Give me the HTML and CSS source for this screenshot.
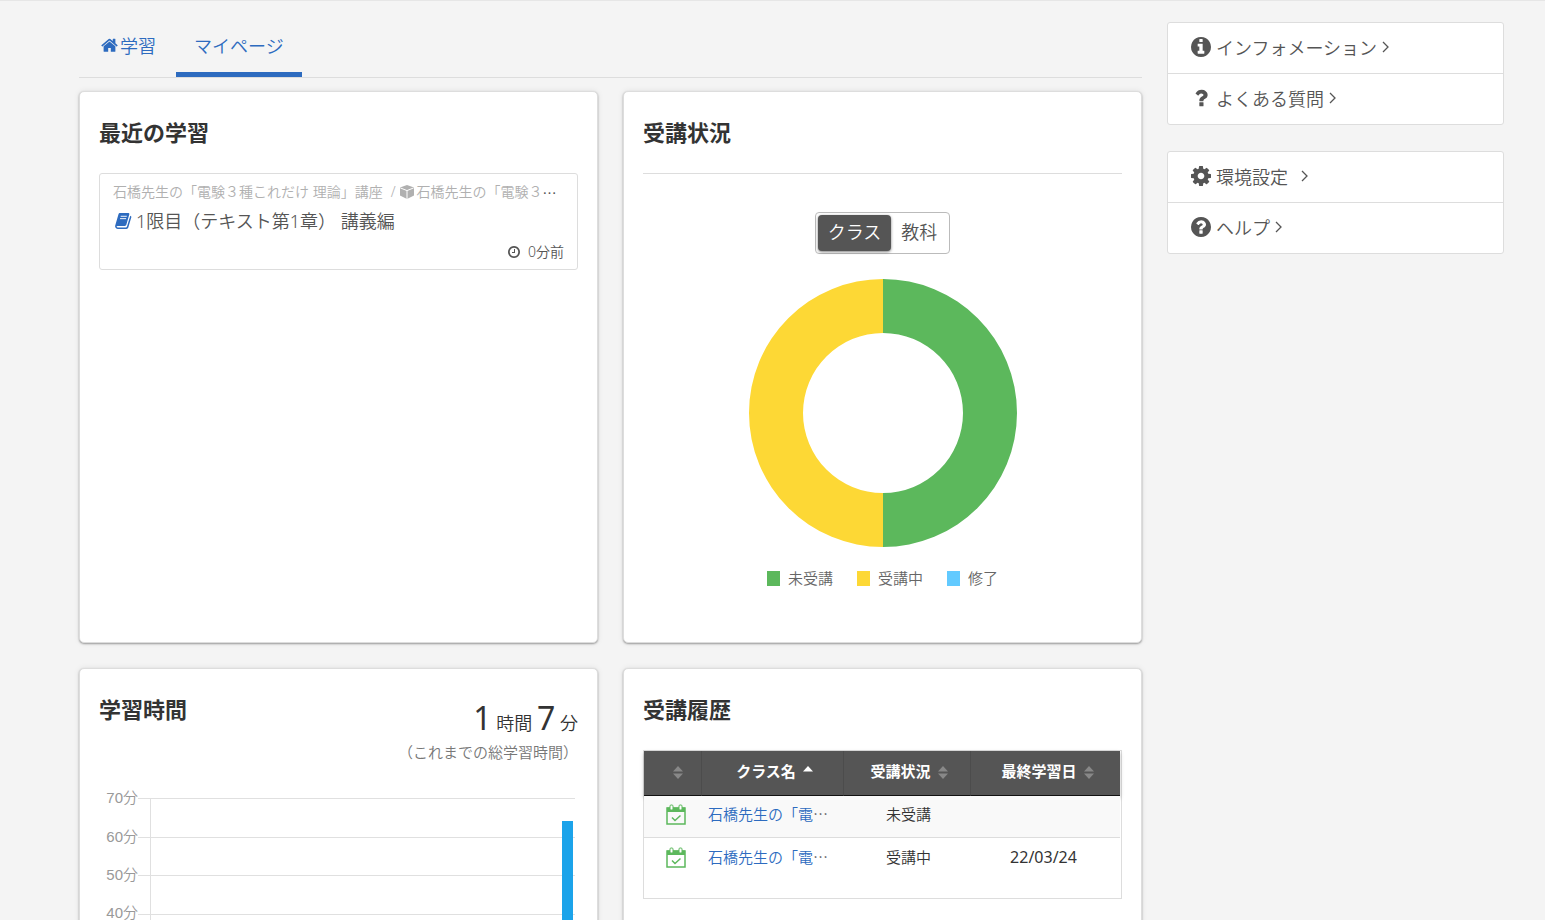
FILE: index.html
```
<!DOCTYPE html>
<html lang="ja">
<head>
    <meta charset="UTF-8">
    <meta name="viewport" content="width=device-width, initial-scale=1.0">
    <title>マイページ</title>
    <link rel="stylesheet" href="styles.css">
</head>
<body>
    <div class="page">
        <main class="main">
            <nav class="tabs">
                <a class="tab" href="#">
                    <svg class="icon icon-home" viewBox="64 192 1664 1344"><path d="M1472 992v480q0 26-19 45t-45 19h-384v-384h-256v384h-384q-26 0-45-19t-19-45v-480q0-1 .5-3t.5-3l575-474 575 474q1 2 1 6zm223-69l-62 74q-8 9-21 11h-3q-13 0-21-7l-692-577-692 577q-12 8-24 7-13-2-21-11l-62-74q-8-10-7-23.5t11-21.5l719-599q32-26 76-26t76 26l244 204v-195q0-14 9-23t23-9h192q14 0 23 9t9 23v408l219 182q10 8 11 21.5t-7 23.5z"/></svg>
                    学習
                </a>
                <a class="tab active" href="#">マイページ</a>
            </nav>

            <div class="cards">
                <section class="card">
                    <h2>最近の学習</h2>
                    <a class="recent" href="#">
                        <span class="recent-path">
                            <span>石橋先生の「電験３種これだけ 理論」講座</span>
                            <span class="slash">/</span>
                            <svg class="icon icon-cube" viewBox="0 0 14 14"><path d="M7 0l7 2.4v8.2L7 14l-7-3.4V2.4z"/><path class="cut" d="M.3 2.9L7 5.6l6.7-2.7M7 5.6V14"/></svg>
                            <span>石橋先生の「電験３</span><span class="dots">…</span>
                        </span>
                        <span class="recent-title">
                            <svg class="icon icon-book" viewBox="0 0 18 17"><path d="M5.500 0h8.700c.8 0 1.200.6 1 1.300L12 12.600c-.2.800-.8 1.200-1.600 1.200H2.800c-1 0-1.300.6-1 1.100.2.300.6.500 1.100.5h8.500c.7 0 1.100-.3 1.300-1L16.200 3c.9.200 1.400.8 1.100 1.600l-3.200 10.800c-.3 1-1 1.500-2 1.500H3C1 16.900-.4 15 .2 13.200L3.600 1.500C3.900.500 4.500 0 5.500 0z"/><path class="cut" d="M6 3.500h6.500M5.300 6h6.500"/></svg>
                            1限目（テキスト第1章） 講義編
                        </span>
                        <span class="recent-time">
                            <svg class="icon icon-clock" viewBox="128 128 1536 1536"><path d="M1024 544v448q0 14-9 23t-23 9h-320q-14 0-23-9t-9-23v-64q0-14 9-23t23-9h224v-352q0-14 9-23t23-9h64q14 0 23 9t9 23zm416 352q0-148-73-273t-198-198-273-73-273 73-198 198-73 273 73 273 198 198 273 73 273-73 198-198 73-273zm224 0q0 209-103 385.5t-279.5 279.5-385.5 103-385.5-103-279.5-279.5-103-385.5 103-385.5 279.5-279.5 385.5-103 385.5 103 279.5 279.5 103 385.5z"/></svg>
                            0分前
                        </span>
                    </a>
                </section>

                <section class="card">
                    <h2>受講状況</h2>
                    <div class="status">
                        <div class="toggle">
                            <button class="toggle-btn active" type="button">クラス</button>
                            <button class="toggle-btn" type="button">教科</button>
                        </div>
                        <svg class="donut" viewBox="0 0 268 268">
                            <path class="fill-green" d="M134 0a134 134 0 0 1 0 268v-54a80 80 0 0 0 0-160z"/>
                            <path class="fill-yellow" d="M134 0a134 134 0 0 0 0 268v-54a80 80 0 0 1 0-160z"/>
                        </svg>
                        <ul class="legend">
                            <li><span class="swatch green"></span>未受講</li>
                            <li><span class="swatch yellow"></span>受講中</li>
                            <li><span class="swatch blue"></span>修了</li>
                        </ul>
                    </div>
                </section>

                <section class="card">
                    <div class="time-head">
                        <h2>学習時間</h2>
                        <div class="total">
                            <p class="total-time"><span class="num">1</span> 時間 <span class="num">7</span> 分</p>
                            <p class="total-note">（これまでの総学習時間）</p>
                        </div>
                    </div>
                    <svg class="bars" viewBox="0 0 479 300">
                        <path class="grid" d="M39 18.500H476M39 57.500H476M39 95.500H476M39 134.500H476M39 172.500H476M39 211.500H476M39 249.500H476M39 288.500H476M51.500 19V288"/>
                        <g class="axis">
                            <text x="39" y="23">70分</text>
                            <text x="39" y="62">60分</text>
                            <text x="39" y="100">50分</text>
                            <text x="39" y="138">40分</text>
                            <text x="39" y="177">30分</text>
                            <text x="39" y="216">20分</text>
                            <text x="39" y="254">10分</text>
                            <text x="39" y="293">0分</text>
                        </g>
                        <rect class="bar" x="463" y="41" width="11" height="247"/>
                    </svg>
                </section>

                <section class="card">
                    <h2>受講履歴</h2>
                    <div class="table-wrap">
                        <table class="history">
                            <colgroup>
                                <col class="col-icon">
                                <col class="col-name">
                                <col class="col-status">
                                <col class="col-date">
                            </colgroup>
                            <thead>
                                <tr>
                                    <th class="mark"><svg class="sort" viewBox="0 0 10 13"><path d="M5 0l5 5.500H0zM5 13l5-5.500H0z"/></svg></th>
                                    <th>クラス名<svg class="sort asc" viewBox="0 0 10 13"><path d="M5 0l5 5.500H0z"/></svg></th>
                                    <th>受講状況<svg class="sort" viewBox="0 0 10 13"><path d="M5 0l5 5.500H0zM5 13l5-5.500H0z"/></svg></th>
                                    <th>最終学習日<svg class="sort" viewBox="0 0 10 13"><path d="M5 0l5 5.500H0zM5 13l5-5.500H0z"/></svg></th>
                                </tr>
                            </thead>
                            <tbody>
                                <tr>
                                    <td class="mark"><svg class="calendar" viewBox="0 0 20 21"><path class="line" d="M1 4h18v16H1z"/><path d="M1 3.500h18V8H1z"/><rect class="ring" x="4" y="1" width="3" height="5" rx="1"/><rect class="ring" x="13" y="1" width="3" height="5" rx="1"/><path class="line" d="M6 13.500l3 3 5.500-5"/></svg></td>
                                    <td class="name"><a href="#">石橋先生の「電</a><span class="dots">…</span></td>
                                    <td>未受講</td>
                                    <td class="date"></td>
                                </tr>
                                <tr>
                                    <td class="mark"><svg class="calendar" viewBox="0 0 20 21"><path class="line" d="M1 4h18v16H1z"/><path d="M1 3.500h18V8H1z"/><rect class="ring" x="4" y="1" width="3" height="5" rx="1"/><rect class="ring" x="13" y="1" width="3" height="5" rx="1"/><path class="line" d="M6 13.500l3 3 5.500-5"/></svg></td>
                                    <td class="name"><a href="#">石橋先生の「電</a><span class="dots">…</span></td>
                                    <td>受講中</td>
                                    <td class="date">22/03/24</td>
                                </tr>
                            </tbody>
                        </table>
                    </div>
                </section>
            </div>
        </main>

        <aside class="side">
            <nav class="menu">
                <a class="menu-item" href="#">
                    <svg class="icon icon-menu" viewBox="128 128 1536 1536"><path d="M1152 1376v-160q0-14-9-23t-23-9h-96v-512q0-14-9-23t-23-9h-320q-14 0-23 9t-9 23v160q0 14 9 23t23 9h96v320h-96q-14 0-23 9t-9 23v160q0 14 9 23t23 9h448q14 0 23-9t9-23zm-128-896v-160q0-14-9-23t-23-9h-192q-14 0-23 9t-9 23v160q0 14 9 23t23 9h192q14 0 23-9t9-23zm640 416q0 209-103 385.5t-279.5 279.5-385.5 103-385.5-103-279.5-279.5-103-385.5 103-385.5 279.5-279.5 385.5-103 385.5 103 279.5 279.5 103 385.5z"/></svg>
                    インフォメーション
                    <svg class="chevron" viewBox="0 0 7 12"><path d="M1 1l5 5-5 5"/></svg>
                </a>
                <a class="menu-item" href="#">
                    <svg class="icon icon-menu" viewBox="128 128 1536 1536"><path d="M1088 1256v240q0 16-12 28t-28 12h-240q-16 0-28-12t-12-28v-240q0-16 12-28t28-12h240q16 0 28 12t12 28zm316-600q0 54-15.5 101t-35 76.5-55 59.5-57.5 43.5-61 35.5q-41 23-68.5 65t-27.5 67q0 17-12 32.5t-28 15.5h-240q-15 0-25.5-18.5t-10.5-37.5v-45q0-83 65-156.5t143-108.5q59-27 84-56t25-76q0-42-46.5-74t-107.5-32q-65 0-108 29-35 25-107 115-13 16-31 16-12 0-25-8l-164-125q-13-10-15.5-25t5.5-28q160-266 464-266 80 0 161 31t146 83 106 127.5 41 158.5z"/></svg>
                    よくある質問
                    <svg class="chevron" viewBox="0 0 7 12"><path d="M1 1l5 5-5 5"/></svg>
                </a>
            </nav>
            <nav class="menu">
                <a class="menu-item wide" href="#">
                    <svg class="icon icon-menu" viewBox="128 128 1536 1536"><path d="M1152 896q0-106-75-181t-181-75-181 75-75 181 75 181 181 75 181-75 75-181zm512-109v222q0 12-8 23t-20 13l-185 28q-19 54-39 91 35 50 107 138 10 12 10 25t-9 23q-27 37-99 108t-94 71q-12 0-26-9l-138-108q-44 23-91 38-16 136-29 186-7 28-36 28h-222q-14 0-24.5-8.5t-11.5-21.5l-28-184q-49-16-90-37l-141 107q-10 9-25 9-14 0-25-11-126-114-165-168-7-10-7-23 0-12 8-23 15-21 51-66.5t54-70.5q-27-50-41-99l-183-27q-13-2-21-12.5t-8-23.5v-222q0-12 8-23t19-13l186-28q14-46 39-92-40-57-107-138-10-12-10-24 0-10 9-23 26-36 98.5-107.5t94.5-71.5q13 0 26 10l138 107q44-23 91-38 16-136 29-186 7-28 36-28h222q14 0 24.5 8.5t11.5 21.5l28 184q49 16 90 37l142-107q9-9 24-9 13 0 25 10 129 119 165 170 7 8 7 22 0 12-8 23-15 21-51 66.5t-54 70.5q26 50 41 98l183 28q13 2 21 12.5t8 23.5z"/></svg>
                    環境設定
                    <svg class="chevron" viewBox="0 0 7 12"><path d="M1 1l5 5-5 5"/></svg>
                </a>
                <a class="menu-item" href="#">
                    <svg class="icon icon-menu" viewBox="128 128 1536 1536"><path d="M1024 1376v-192q0-14-9-23t-23-9h-192q-14 0-23 9t-9 23v192q0 14 9 23t23 9h192q14 0 23-9t9-23zm256-672q0-88-55.5-163t-138.5-116-170-41q-243 0-371 213-15 24 8 42l132 100q7 6 19 6 16 0 25-12 53-68 86-92 34-24 86-24 48 0 85.5 26t37.5 59q0 38-20 61t-68 45q-63 28-115.5 86.5t-52.5 125.5v36q0 14 9 23t23 9h192q14 0 23-9t9-23q0-19 21.5-49.5t54.5-49.5q32-18 49-28.5t46-35 44.5-48 28-60.5 12.5-81zm384 192q0 209-103 385.5t-279.5 279.5-385.5 103-385.5-103-279.5-279.5-103-385.5 103-385.5 279.5-279.5 385.5-103 385.5 103 279.5 279.5 103 385.5z"/></svg>
                    ヘルプ
                    <svg class="chevron" viewBox="0 0 7 12"><path d="M1 1l5 5-5 5"/></svg>
                </a>
            </nav>
        </aside>
    </div>
</body>
</html>
```

FILE: styles.css
```
/* Base styles */
* {
    box-sizing: border-box;
}

body {
    margin: 0;
    background-color: #f4f4f4;
    color: #333;
    font-family: "Noto Sans", "Noto Sans CJK JP", sans-serif;
    font-size: 15px;
    font-weight: 350;
}

a {
    color: #2d6bbf;
    text-decoration: none;
}

h2,
p,
ul {
    margin: 0;
    padding: 0;
}

.icon {
    flex: none;
    fill: currentColor;
}

.icon .cut {
    fill: none;
    stroke: #fff;
}

.dots {
    font-family: "Noto Sans CJK JP", sans-serif;
    color: #555;
}

/* Page layout */
.page {
    display: grid;
    grid-template-columns: minmax(0, 1fr) 337px;
    column-gap: 25px;
    height: 100vh;
    padding: 0 41px 0 79px;
    border-top: 1px solid #e6e6e6;
    overflow: hidden;
}

/* Tabs */
.tabs {
    display: flex;
    gap: 2px;
    height: 77px;
    margin-bottom: 13px;
    padding-left: 4px;
    border-bottom: 1px solid #ddd;
    font-size: 18px;
}

.tab {
    display: flex;
    align-items: center;
    gap: 2px;
    padding: 18px 18px 2px;
    border-bottom: 5px solid transparent;
}

.tab.active {
    border-bottom-color: #2d6bbf;
}

.icon-home {
    width: 17px;
    height: 14px;
}

/* Cards */
.cards {
    display: grid;
    grid-template-columns: repeat(2, minmax(0, 1fr));
    gap: 25px;
}

.card {
    padding: 19px;
    background-color: #fff;
    border: 1px solid #ddd;
    border-radius: 5px;
    box-shadow: 0 1px 2px rgba(0, 0, 0, 0.35), 0 0 6px rgba(0, 0, 0, 0.08);
}

.card h2 {
    margin-bottom: 20px;
    font-size: 22px;
    line-height: 42px;
    font-weight: bold;
}

/* Recent study */
.recent {
    display: flex;
    flex-direction: column;
    padding: 6px 13px 3px;
    border: 1px solid #ddd;
    border-radius: 3px;
    color: #555;
}

.recent-path {
    display: flex;
    align-items: center;
    font-size: 14px;
    line-height: 24px;
    color: #b0b0b0;
    white-space: nowrap;
    overflow: hidden;
}

.slash {
    margin: 0 4px 0 8px;
}

.icon-cube {
    width: 14px;
    height: 14px;
    margin-right: 3px;
}

.recent-title {
    display: flex;
    align-items: center;
    gap: 4px;
    padding-left: 2px;
    font-size: 18px;
    line-height: 34px;
}

.icon-book {
    width: 17px;
    height: 16px;
    color: #2d6bbf;
}

.recent-time {
    display: flex;
    align-items: center;
    justify-content: flex-end;
    gap: 8px;
    font-size: 14px;
    line-height: 28px;
}

.icon-clock {
    width: 12px;
    height: 12px;
}

/* Class status */
.status {
    display: flex;
    flex-direction: column;
    align-items: center;
    padding: 38px 0 30px;
    border-top: 1px solid #ddd;
}

.toggle {
    display: flex;
    margin-bottom: 25px;
    padding: 2px;
    border: 1px solid #bbb;
    border-radius: 4px;
}

.toggle-btn {
    height: 36px;
    padding: 0 10px 4px;
    border: none;
    border-radius: 4px;
    background: none;
    color: #555;
    font: inherit;
    font-size: 18px;
    cursor: pointer;
}

.toggle-btn.active {
    background-color: #555;
    color: #fff;
    box-shadow: 0 1px 3px rgba(0, 0, 0, 0.5);
}

.donut {
    width: 268px;
    height: 268px;
    margin-bottom: 16px;
}

.fill-green {
    fill: #5cb85c;
}

.fill-yellow {
    fill: #fdd835;
}

.legend {
    display: flex;
    gap: 24px;
    list-style: none;
    line-height: 30px;
    color: #666;
}

.legend li {
    display: flex;
    align-items: center;
    gap: 8px;
}

.swatch {
    width: 13px;
    height: 15px;
}

.swatch.green {
    background-color: #5cb85c;
}

.swatch.yellow {
    background-color: #fdd835;
}

.swatch.blue {
    background-color: #62caff;
}

/* Study time */
.time-head {
    display: flex;
    justify-content: space-between;
}

.total {
    padding-top: 18px;
    text-align: right;
}

.total-time {
    font-size: 18px;
    line-height: 34px;
}

.total-time .num {
    font-size: 32px;
    font-weight: 400;
    line-height: 24px;
}

.total-note {
    line-height: 24px;
    color: #777;
}

.bars {
    display: block;
    width: 100%;
    margin-top: 16px;
}

.grid {
    fill: none;
    stroke: #e0e0e0;
}

.axis {
    fill: #999;
    font-family: "Liberation Sans", "Noto Sans CJK JP", sans-serif;
    font-size: 15px;
    text-anchor: end;
}

.bar {
    fill: #1ba3ea;
}

/* History table */
.table-wrap {
    padding: 0 1px 18px 0;
    border: 1px solid #ddd;
}

.history {
    width: 100%;
    table-layout: fixed;
    border-collapse: separate;
    border-spacing: 0;
    text-align: center;
}

.col-icon {
    width: 58px;
}

.col-name {
    width: 142px;
}

.col-status {
    width: 127px;
}

.history thead {
    box-shadow: 0 2px 4px rgba(0, 0, 0, 0.25);
}

.history th {
    height: 45px;
    padding: 0 0 5px 4px;
    background-color: #555;
    border-right: 1px solid #4c4c4c;
    border-bottom: 1px solid #111;
    color: #fff;
}

.history th:last-child {
    border-right: none;
}

.history td {
    height: 42px;
    padding: 0 4px 6px 6px;
}

.history tbody tr:first-child td {
    background-color: #f9f9f9;
    border-bottom: 1px solid #ddd;
}

.history .name {
    text-align: left;
    white-space: nowrap;
}

.history .mark {
    padding-left: 10px;
}

.history .date {
    padding: 0 10px 4px 6px;
    font-size: 16px;
    font-weight: 400;
}

.sort {
    width: 10px;
    height: 13px;
    margin-left: 7px;
    vertical-align: -2px;
    fill: #888;
}

.sort.asc {
    fill: #fff;
}

.mark .sort {
    margin-left: 0;
}

.calendar {
    display: block;
    width: 20px;
    height: 21px;
    margin: 2px auto 0;
    fill: #5cb85c;
}

.calendar .line {
    fill: none;
    stroke: #5cb85c;
    stroke-width: 1.5;
}

.calendar .ring {
    fill: #fff;
    stroke: #5cb85c;
}

/* Side menu */
.side {
    padding-top: 21px;
}

.menu {
    margin-bottom: 26px;
    background-color: #fff;
    border: 1px solid #ddd;
    border-radius: 3px;
}

.menu-item {
    display: flex;
    align-items: center;
    gap: 5px;
    height: 50px;
    padding: 0 0 2px 23px;
    color: #555;
    font-size: 18px;
}

.menu-item + .menu-item {
    height: 51px;
    border-top: 1px solid #ddd;
}

.icon-menu {
    width: 20px;
    height: 20px;
}

.chevron {
    width: 7px;
    height: 12px;
    fill: none;
    stroke: #555;
    stroke-width: 1.3;
}

.wide .chevron {
    margin-left: 8px;
}
```
